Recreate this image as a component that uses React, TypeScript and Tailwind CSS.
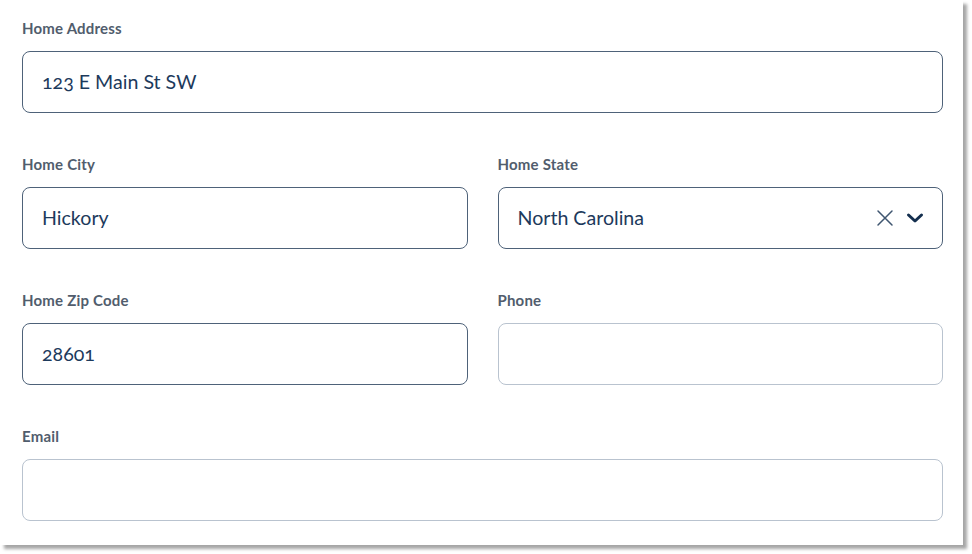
import React from "react";

const font = { fontFamily: "Lato, 'Open Sans', sans-serif" };

function Label({ children }: { children: React.ReactNode }) {
  return (
    <div className="h-5 text-[15px] leading-5 font-bold tracking-[0.2px] text-[#515d6d] mb-[13px]">{children}</div>
  );
}

function Field({ value, filled }: { value?: string; filled?: boolean }) {
  return (
    <div
      className={`h-[62px] rounded-[8px] border-[1.5px] flex items-center px-[19px] text-[19.6px] text-[#1d3a5c] oldstyle-nums ${
        filled ? "border-[#4e6279]" : "border-[#b9c3cf]"
      }`}
    >
      {value}
    </div>
  );
}

export default function App() {
  return (
    <div className="w-[972px] h-[554px] bg-white" style={font}>
      <div className="w-[963px] h-[545px] bg-white shadow-[4px_4px_3px_rgba(0,0,0,0.35)] pt-[18px] pl-[22px] pr-[20px] flex flex-col gap-[41px]">
        <div>
          <Label>Home Address</Label>
          <Field value="123 E Main St SW" filled />
        </div>
        <div className="grid grid-cols-2 gap-[30px]">
          <div>
            <Label>Home City</Label>
            <Field value="Hickory" filled />
          </div>
          <div>
            <Label>Home State</Label>
            <div className="h-[62px] rounded-[8px] border-[1.5px] border-[#4e6279] flex items-center pl-[19px] pr-[18px] text-[19.6px] text-[#1d3a5c]">
              <span className="flex-1">North Carolina</span>
              <svg width="18" height="18" viewBox="0 0 18 18" className="mr-[12px]" fill="none" stroke="#3f5670" strokeWidth="1.5" strokeLinecap="round">
                <path d="M2 2 L16 16 M16 2 L2 16" />
              </svg>
              <svg width="18" height="12" viewBox="0 0 18 12" fill="none" stroke="#142f4f" strokeWidth="3" strokeLinecap="round" strokeLinejoin="round">
                <path d="M2.5 3 L9 9 L15.5 3" />
              </svg>
            </div>
          </div>
        </div>
        <div className="grid grid-cols-2 gap-[30px]">
          <div>
            <Label>Home Zip Code</Label>
            <Field value="28601" filled />
          </div>
          <div>
            <Label>Phone</Label>
            <Field />
          </div>
        </div>
        <div>
          <Label>Email</Label>
          <Field />
        </div>
      </div>
    </div>
  );
}
